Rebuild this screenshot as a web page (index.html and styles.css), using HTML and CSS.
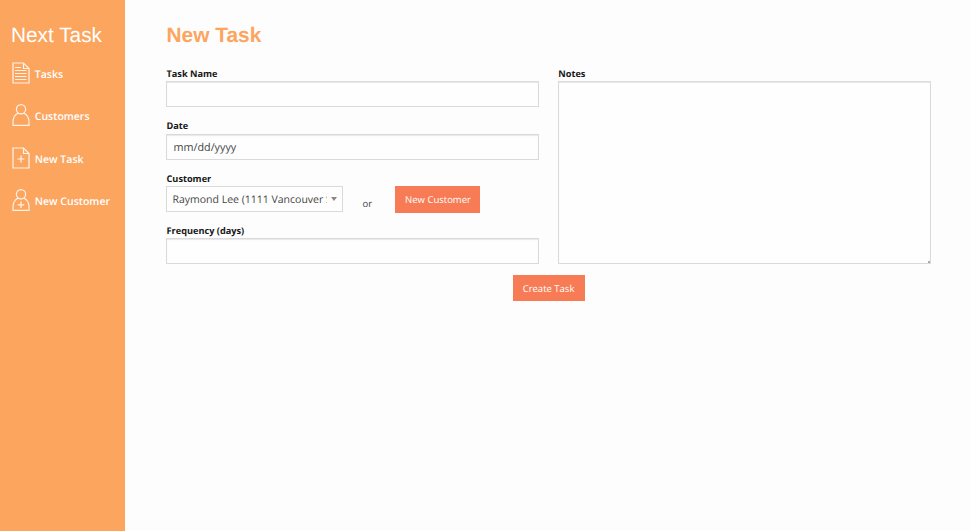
FILE: index.html
```html
<!DOCTYPE html>
<html lang="en">
<head>
<meta charset="utf-8">
<title>Next Task</title>
<link rel="stylesheet" href="styles.css">
</head>
<body>
<nav class="sidebar">
  <div class="brand">Next Task</div>
  <a class="nav-item"><svg class="icon" viewBox="0 0 18 22"><path d="M1 1H11.5L17 6.5V21H1ZM11.5 1V6.5H17M3 5.5H9M3 8.5H14.5M3 11.5H14.5M3 14.5H14.5M3 17.5H14.5"/></svg><span>Tasks</span></a>
  <a class="nav-item"><svg class="icon" viewBox="0 0 18 22"><circle cx="9" cy="5.2" r="4.6"/><path d="M6.3 9C3.2 10.5 1 14 1 18V21.4H17V18C17 14 14.8 10.5 11.7 9"/></svg><span>Customers</span></a>
  <a class="nav-item"><svg class="icon" viewBox="0 0 18 22"><path d="M1 1H11.5L17 6.5V21H1ZM11.5 1V6.5H17M5.6 12H12.4M9 8.6V15.4"/></svg><span>New Task</span></a>
  <a class="nav-item"><svg class="icon" viewBox="0 0 18 22"><circle cx="9" cy="5.2" r="4.6"/><path d="M6.3 9C3.2 10.5 1 14 1 18V21.4H17V18C17 14 14.8 10.5 11.7 9M5.8 15.8H12.2M9 12.6V19"/></svg><span>New Customer</span></a>
</nav>
<main class="content">
  <h1 class="title">New Task</h1>
  <form>
    <div class="columns">
      <div class="fields">
        <div class="field"><label>Task Name</label><input class="control" type="text"></div>
        <div class="field"><label>Date</label><input class="control date" type="text" placeholder="mm/dd/yyyy"></div>
        <div class="field"><label>Customer</label>
          <div class="customer-row">
            <div class="control select"><span class="select-text">Raymond Lee (1111 Vancouver St)</span><span class="arrow"></span></div>
            <span class="or">or</span>
            <button class="button button-customer" type="button">New Customer</button>
          </div>
        </div>
        <div class="field"><label>Frequency (days)</label><input class="control" type="text"></div>
      </div>
      <div class="notes"><label>Notes</label><textarea class="control notes-input"></textarea></div>
    </div>
    <div class="actions"><button class="button button-create" type="button">Create Task</button></div>
  </form>
</main>
</body>
</html>
```
FILE: styles.css
```css
* { box-sizing: border-box; }
body {
  margin: 0;
  height: 531px;
  display: flex;
  overflow: hidden;
  background: #fdfdfd;
  font-family: "Open Sans", sans-serif;
  text-rendering: geometricPrecision;
  color: #444;
}
.sidebar {
  width: 125.3px;
  flex: none;
  padding: 22px 0 0 11px;
  background: #fca55f;
  color: #fff;
}
.brand {
  height: 29px;
  margin-bottom: 0.8px;
  font: 20.8px/28px "Liberation Sans", sans-serif;
  white-space: nowrap;
}
.nav-item {
  height: 42.3px;
  display: flex;
  align-items: center;
  gap: 4.5px;
  padding-left: 1.3px;
  font-size: 10.5px;
  font-weight: 600;
  white-space: nowrap;
}
.nav-item span { padding-top: 4px; }
.icon {
  width: 18px;
  height: 22px;
  overflow: visible;
  fill: none;
  stroke: #fff3e9;
  stroke-width: 1.2;
}
.content { padding: 20px 0 0 41.2px; }
.title {
  margin: 0;
  height: 47px;
  font: bold 20.9px/31px "Liberation Sans", sans-serif;
  color: #fca55f;
}
.columns { display: flex; gap: 19.5px; }
.fields, .notes { width: 372.3px; }
.field { height: 52.35px; }
label {
  display: block;
  height: 14.4px;
  font-size: 9.2px;
  line-height: 14px;
  font-weight: 700;
  color: #171717;
}
.control {
  display: block;
  width: 100%;
  height: 26px;
  margin: 0;
  padding: 0 6px;
  border: 1px solid #dadada;
  border-radius: 0;
  outline: 0;
  background: #fefefe;
  box-shadow: inset 0 1px 1px #e8e8e8;
  font: 10.5px "Open Sans", sans-serif;
  text-rendering: geometricPrecision;
  color: #444;
}
.control::placeholder { color: #444; opacity: 1; }
.date { padding-top: 1px; font-size: 10.8px; }
.customer-row { display: flex; }
.select {
  width: 177px;
  display: flex;
  padding: 0 5px;
  box-shadow: none;
}
.select-text {
  width: 154.5px;
  overflow: hidden;
  white-space: nowrap;
  line-height: 27px;
}
.arrow {
  margin: 10px 0 0 4px;
  width: 0;
  height: 0;
  border: 2.5px solid transparent;
  border-width: 4px 3px 0;
  border-top-color: #888;
}
.or { margin-left: 19px; width: 33px; padding-top: 11px; font-size: 9.5px; line-height: 14px; }
.button {
  padding: 0;
  height: 26.5px;
  flex: none;
  border: 0;
  background: #f77b55;
  color: #fff;
  font: 9.5px "Open Sans", sans-serif;
  text-rendering: geometricPrecision;
}
.button-customer { width: 85px; }
.button-create { width: 72px; }
.notes-input { height: 183px; resize: none; }
.notes {
  position: relative;
}
.notes::after {
  content: "";
  position: absolute;
  right: 1px;
  top: 194px;
  width: 2px;
  height: 2px;
  background: #aaa;
}
.actions { display: flex; justify-content: center; margin-top: -1.4px; }
```
